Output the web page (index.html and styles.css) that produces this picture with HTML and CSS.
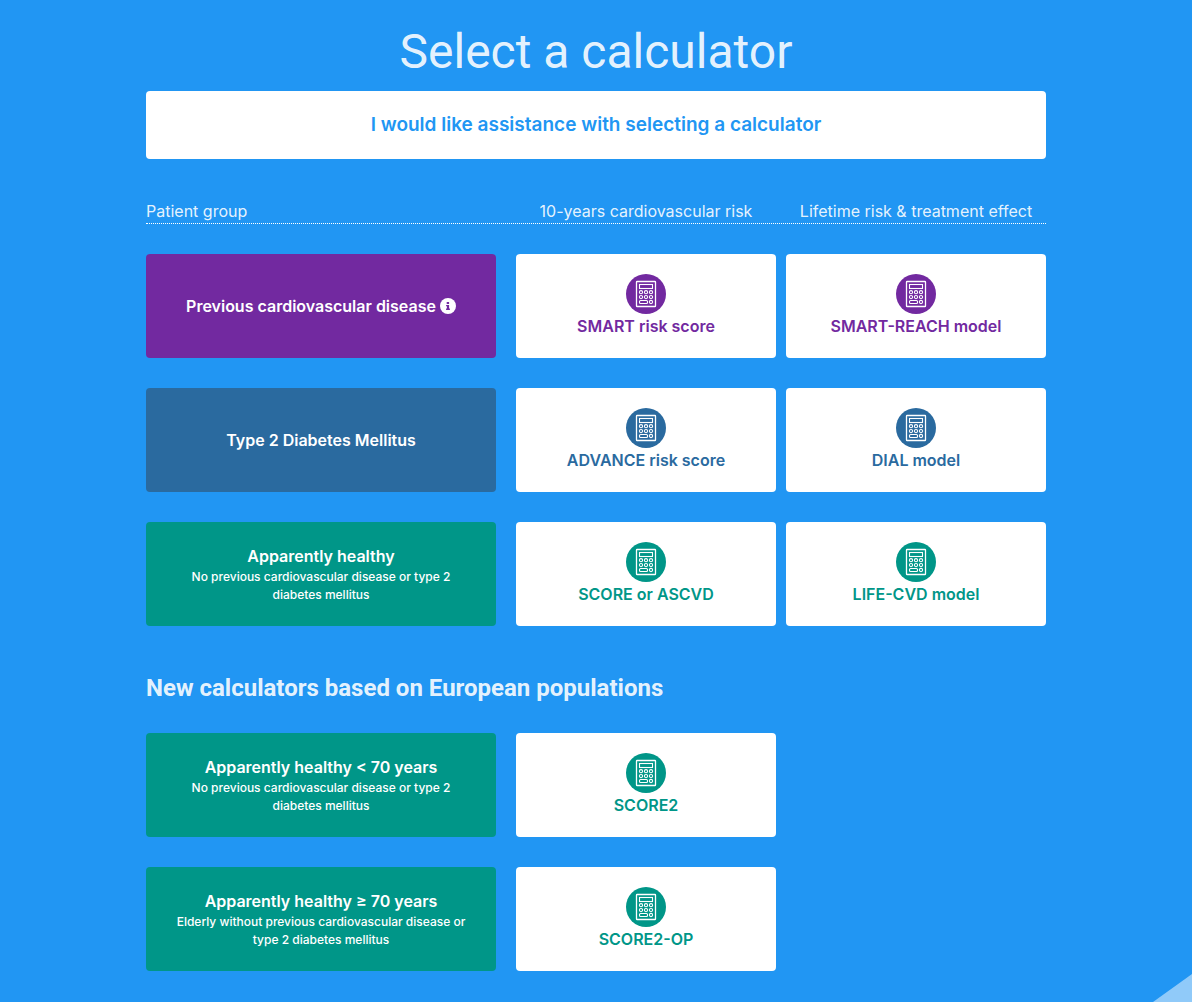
FILE: index.html
```html
<!DOCTYPE html>
<html lang="en">
<head>
<meta charset="utf-8">
<meta name="viewport" content="width=device-width, initial-scale=1">
<title>Select a calculator</title>
<link rel="stylesheet" href="styles.css">
</head>
<body>
<svg class="sprite" aria-hidden="true">
  <symbol id="calc" viewBox="0 0 40 40">
    <circle cx="20" cy="20" r="20" fill="currentColor"/>
    <g fill="none" stroke="#fff" stroke-width="1.1">
      <rect x="10.5" y="7.5" width="19" height="25" rx=".6" stroke-width="1.3"/>
      <rect x="13.5" y="10.5" width="13" height="4"/>
      <circle cx="15" cy="18.2" r="1.6"/><circle cx="20" cy="18.2" r="1.6"/><circle cx="25" cy="18.2" r="1.6"/>
      <circle cx="15" cy="23.1" r="1.6"/><circle cx="20" cy="23.1" r="1.6"/><circle cx="25" cy="23.1" r="1.6"/>
      <rect x="13.5" y="26.5" width="8" height="3" rx="1"/><circle cx="25" cy="28" r="1.6"/>
    </g>
  </symbol>
</svg>
<main class="page">
  <h1 class="title">Select a calculator</h1>
  <a class="assist" href="#assist">I would like assistance with selecting a calculator</a>

  <div class="grid heads">
    <span class="head-group">Patient group</span>
    <span>10-years cardiovascular risk</span>
    <span>Lifetime risk &amp; treatment effect</span>
  </div>

  <section class="rows">
    <div class="grid purple">
      <div class="group">
        <strong class="name">Previous cardiovascular disease
          <svg class="info" viewBox="0 0 16 16" role="img" aria-label="More information"><circle cx="8" cy="8" r="8" fill="#fff"/><path fill="currentColor" d="M6.7 4h2.4v2H6.7zM6.1 6.9h3v3.7h.8v1.3H6.1v-1.3h.8V8.2h-.8z"/></svg>
        </strong>
      </div>
      <a class="calc" href="#smart"><svg class="icon" aria-hidden="true"><use href="#calc"/></svg>SMART risk score</a>
      <a class="calc" href="#smart-reach"><svg class="icon" aria-hidden="true"><use href="#calc"/></svg>SMART-REACH model</a>
    </div>
    <div class="grid blue">
      <div class="group"><strong class="name">Type 2 Diabetes Mellitus</strong></div>
      <a class="calc" href="#advance"><svg class="icon" aria-hidden="true"><use href="#calc"/></svg>ADVANCE risk score</a>
      <a class="calc" href="#dial"><svg class="icon" aria-hidden="true"><use href="#calc"/></svg>DIAL model</a>
    </div>
    <div class="grid green">
      <div class="group">
        <strong class="name">Apparently healthy</strong>
        <span class="note">No previous cardiovascular disease or type 2 diabetes mellitus</span>
      </div>
      <a class="calc" href="#score"><svg class="icon" aria-hidden="true"><use href="#calc"/></svg>SCORE or ASCVD</a>
      <a class="calc" href="#life-cvd"><svg class="icon" aria-hidden="true"><use href="#calc"/></svg>LIFE-CVD model</a>
    </div>
  </section>

  <h2 class="subtitle">New calculators based on European populations</h2>

  <section class="rows">
    <div class="grid green">
      <div class="group">
        <strong class="name">Apparently healthy &lt; 70 years</strong>
        <span class="note">No previous cardiovascular disease or type 2 diabetes mellitus</span>
      </div>
      <a class="calc" href="#score2"><svg class="icon" aria-hidden="true"><use href="#calc"/></svg>SCORE2</a>
    </div>
    <div class="grid green">
      <div class="group">
        <strong class="name">Apparently healthy ≥ 70 years</strong>
        <span class="note">Elderly without previous cardiovascular disease or type 2 diabetes mellitus</span>
      </div>
      <a class="calc" href="#score2-op"><svg class="icon" aria-hidden="true"><use href="#calc"/></svg>SCORE2-OP</a>
    </div>
  </section>
</main>
<div class="corner" aria-hidden="true"></div>
</body>
</html>
```
FILE: styles.css
```css
* { box-sizing: border-box; }

body {
  margin: 0;
  background: #2196f3;
  color: #fff;
  font: 16px/20px Inter, "Liberation Sans", sans-serif;
}

.sprite { display: none; }

.page {
  max-width: 932px;
  margin: 0 auto;
  padding: 24px 16px 31px;
}

.title,
.subtitle {
  margin: 0;
  color: rgba(255, 255, 255, .9);
  font-family: Roboto, "Liberation Sans", sans-serif;
}

.title {
  font-size: 48px;
  line-height: 56px;
  font-weight: 400;
  text-align: center;
}

.assist {
  display: block;
  margin-top: 11px;
  padding: 24px;
  border-radius: 4px;
  background: #fff;
  color: #2196f3;
  font-size: 19px;
  font-weight: 600;
  text-align: center;
  text-decoration: none;
}

.grid {
  display: grid;
  grid-template-columns: 36fr 26fr 26fr;
  column-gap: 10px;
}

.heads {
  margin-top: 42px;
  padding-bottom: 2px;
  border-bottom: 1px dotted #fff;
  color: rgba(255, 255, 255, .9);
  text-align: center;
}

.head-group { text-align: left; }

.rows {
  display: grid;
  gap: 30px;
  margin-top: 30px;
}

.group,
.calc {
  display: flex;
  flex-direction: column;
  align-items: center;
  min-height: 104px;
  border-radius: 4px;
}

.group {
  justify-content: center;
  margin-right: 10px;
  padding: 16px 20px;
  text-align: center;
}

.name { font-weight: 600; }

.note {
  margin-top: 2px;
  font-size: 12px;
  line-height: 18px;
  font-weight: 500;
}

.info {
  width: 16px;
  height: 16px;
  vertical-align: -2px;
}

.calc {
  padding: 20px 16px;
  background: #fff;
  font-weight: 600;
  text-decoration: none;
}

.icon {
  width: 40px;
  height: 40px;
  margin-bottom: 2px;
}

.purple .group { background: #7229a0; }
.purple .calc, .purple .info { color: #7229a0; }
.blue .group { background: #2a6a9f; }
.blue .calc { color: #2a6a9f; }
.green .group {
  justify-content: flex-start;
  padding-top: 24px;
  background: #009688;
}
.green .calc { color: #009688; }

.subtitle {
  margin-top: 47px;
  font-size: 24px;
  line-height: 30px;
  font-weight: 700;
}

/* Light triangle tucked into the window's bottom right corner */
.corner {
  position: fixed;
  right: 0;
  bottom: 0;
  width: 39px;
  height: 28px;
  background: #90caf9;
  clip-path: polygon(100% 0, 100% 100%, 0 100%);
}
```
